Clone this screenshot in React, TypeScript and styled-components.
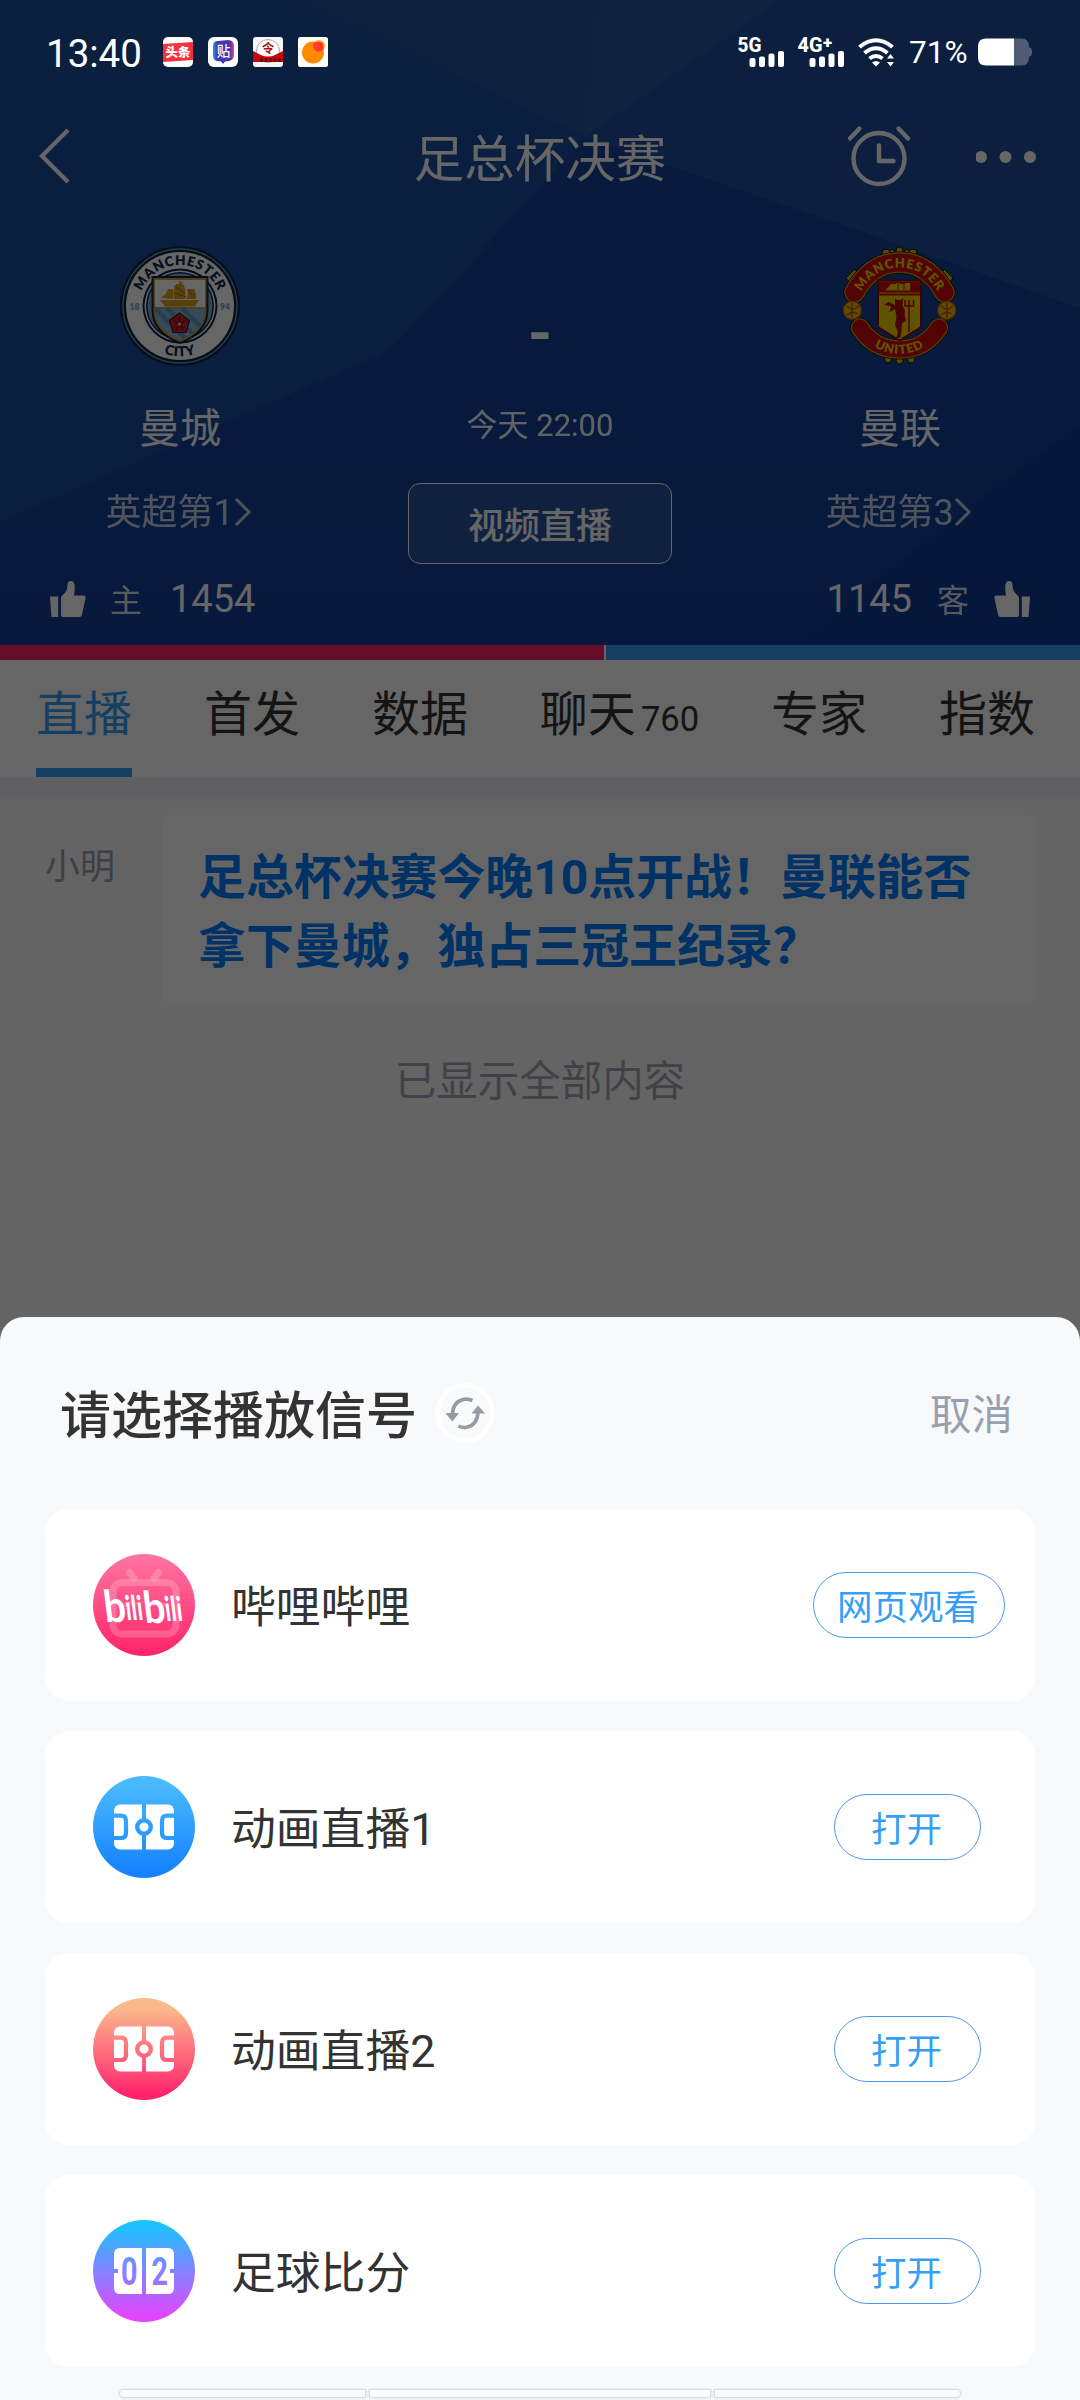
import React, { useState } from 'react';
import styled, { createGlobalStyle } from 'styled-components';

type Tab = { name: string; count?: number };

type Signal = {
  name: string;
  action: string;
  icon: React.ReactNode;
  wide?: boolean;
};

const GlobalStyle = createGlobalStyle`
  * {
    box-sizing: border-box;
  }
  body {
    margin: 0;
    font-family: Roboto, "Noto Sans CJK SC", sans-serif;
  }
`;

const Screen = styled.div`
  position: relative;
  width: 1080px;
  height: 2400px;
  overflow: hidden;
  background: #f8faf8;
`;

/* ---------- status bar ---------- */

const StatusBar = styled.div`
  position: absolute;
  top: 0;
  left: 0;
  z-index: 3;
  display: flex;
  align-items: center;
  width: 100%;
  height: 104px;
  padding: 0 48px 0 46px;
  color: #fff;
`;

const Clock = styled.span`
  width: 117px;
  font-size: 38.5px;
  line-height: 44px;
  padding-top: 3px;
`;

const AppIcons = styled.div`
  display: flex;
  gap: 15px;
  flex: 1;
`;

const Indicators = styled.div`
  display: flex;
  align-items: center;
  gap: 13px;
`;

const Percent = styled.span`
  width: 59px;
  margin: 0 -3px 0 2px;
  padding-top: 1px;
  font-size: 31.5px;
  line-height: 36px;
  white-space: nowrap;
`;

/* ---------- match header ---------- */

const Header = styled.header`
  position: relative;
  height: 645px;
  padding-top: 102px;
  background: #194aa6;
  color: #fff;
`;

const Backdrop = styled.svg`
  position: absolute;
  top: 0;
  left: 0;
`;

const NavBar = styled.div`
  position: relative;
  display: grid;
  grid-template-columns: 1fr auto 1fr;
  align-items: center;
  height: 108px;
  padding: 0 42px 0 37px;
`;

const NavTitle = styled.h1`
  margin: 0;
  padding: 8px 0 0 5px;
  font-size: 50.5px;
  line-height: 60px;
  font-weight: 400;
`;

const NavActions = styled.div`
  display: flex;
  justify-content: flex-end;
  align-items: center;
  gap: 64px;
`;

const Match = styled.div`
  position: relative;
  display: grid;
  grid-template-columns: 360px 360px 360px;
  height: 328px;
`;

const Team = styled.div`
  display: flex;
  flex-direction: column;
  align-items: center;
  padding-top: 36px;
`;

const TeamName = styled.div`
  margin-top: 33px;
  font-size: 41px;
  line-height: 60px;
`;

const Rank = styled.div`
  display: flex;
  align-items: center;
  margin-top: 29px;
  margin-right: 3px;
  font-size: 36px;
  line-height: 50px;
  opacity: 0.75;
`;

const Kickoff = styled.div`
  display: flex;
  flex-direction: column;
  align-items: center;
`;

const Score = styled.div`
  margin-top: 93px;
  font-size: 62px;
  line-height: 60px;
  font-weight: 700;
`;

const Time = styled.div`
  margin-top: 43px;
  font-size: 31px;
  line-height: 40px;
  opacity: 0.95;
`;

const WatchButton = styled.button`
  width: 264px;
  height: 81px;
  margin-top: 37px;
  padding: 0 0 2px;
  border: 1px solid #fff;
  border-radius: 12px;
  background: rgba(255, 255, 255, 0.1);
  color: #fff;
  font-family: inherit;
  font-size: 36px;
  font-weight: 500;
`;

const Votes = styled.div`
  position: relative;
  display: flex;
  justify-content: space-between;
  height: 90px;
  margin-top: 16px;
  padding: 0 50px;
`;

const Vote = styled.div<{ $away?: boolean }>`
  display: flex;
  flex-direction: ${({ $away }) => ($away ? 'row-reverse' : 'row')};
  align-items: center;
  font-size: 38px;
`;

const VoteSide = styled.span<{ $away?: boolean }>`
  margin: ${({ $away }) => ($away ? '0 25px 2px 25px' : '0 28px 2px 24px')};
  font-size: 32px;
  opacity: 0.85;
`;

const VoteBar = styled.div`
  display: flex;
  gap: 2px;
  height: 15px;
  background: #fff;
`;

const VoteShare = styled.div<{ $color: string }>`
  background: ${({ $color }) => $color};
`;

/* ---------- tabs and feed ---------- */

const Tabs = styled.nav`
  display: flex;
  justify-content: space-between;
  height: 117px;
  padding: 0 45px 0 36px;
  background: #fff;
`;

const TabItem = styled.button<{ $active: boolean }>`
  display: flex;
  align-items: baseline;
  height: 117px;
  padding: 20px 0 0;
  border: 0;
  border-bottom: 9px solid ${({ $active }) => ($active ? '#369ff5' : 'transparent')};
  background: none;
  color: ${({ $active }) => ($active ? '#369ff5' : '#333')};
  font-family: inherit;
  font-size: 48px;
  line-height: 70px;
`;

const TabCount = styled.span`
  margin-left: 5px;
  font-size: 34.5px;
`;

const Gap = styled.div`
  height: 26px;
  background: linear-gradient(#eef1f4, #f0f1f6 70%, #f8faf8);
`;

const FeedRow = styled.div`
  display: grid;
  grid-template-columns: 117px 873px;
  padding: 12px 45px 0;
`;

const Author = styled.div`
  padding-top: 28px;
  font-size: 35px;
  line-height: 50px;
  color: #989fad;
`;

const Message = styled.div`
  height: 189px;
  padding: 29px 36px 0;
  border-radius: 6px;
  background: #fff;
  color: #007dff;
  font-size: 47.9px;
  line-height: 69px;
  font-weight: 700;
`;

const FeedEnd = styled.div`
  margin-top: 48px;
  font-size: 41.5px;
  line-height: 60px;
  text-align: center;
  color: #a2a6b2;
`;

/* ---------- bottom sheet ---------- */

const Mask = styled.div`
  position: absolute;
  inset: 0;
  z-index: 1;
  background: rgba(0, 0, 0, 0.6);
`;

const Sheet = styled.section`
  position: absolute;
  left: 0;
  bottom: 0;
  z-index: 2;
  width: 100%;
  height: 1083px;
  border-radius: 24px 24px 0 0;
  background: #f7f9fb;
`;

const SheetHead = styled.div`
  display: flex;
  align-items: center;
  height: 192px;
  padding: 0 67px 0 60px;
`;

const SheetTitle = styled.h2`
  margin: 7px 18px 0 0;
  font-size: 51px;
  line-height: 60px;
  font-weight: 500;
  color: #333;
`;

const Cancel = styled.button`
  margin: 5px 0 0 auto;
  padding: 0;
  border: 0;
  background: none;
  color: #999fae;
  font-family: inherit;
  font-size: 41.5px;
  line-height: 60px;
`;

const SignalList = styled.div`
  display: flex;
  flex-direction: column;
  gap: 30px;
  padding: 0 45px;
`;

const SignalCard = styled.div<{ $wide?: boolean }>`
  display: flex;
  align-items: center;
  height: 192px;
  padding: 0 ${({ $wide }) => ($wide ? 30 : 54)}px 0 48px;
  border-radius: 24px;
  background: #fff;
`;

const SignalName = styled.span`
  flex: 1;
  padding-top: 6px;
  margin-left: 36px;
  font-size: 44.8px;
  line-height: 60px;
  color: #333;
`;

const OpenButton = styled.button<{ $wide?: boolean }>`
  width: ${({ $wide }) => ($wide ? 192 : 147)}px;
  height: 66px;
  padding: 0 2px 2px 0;
  border: 1px solid #4c9be6;
  border-radius: 33px;
  background: #fff;
  color: #369ff5;
  font-family: inherit;
  font-size: 35.5px;
`;

const NavHint = styled.div`
  display: flex;
  gap: 5px;
  padding: 23px 120px 0;
`;

const NavHintPart = styled.i<{ $grow: number; $radius: string }>`
  flex: ${({ $grow }) => $grow} 0 0;
  height: 7px;
  border-radius: ${({ $radius }) => $radius};
  background: #fbfcfe;
  box-shadow: 0 0 2px 1px rgba(0, 0, 0, 0.16);
`;

/* ---------- drawings ---------- */

const HeaderBackdrop = () => (
  <Backdrop width="1080" height="645" viewBox="0 0 1080 645">
    <defs>
      <linearGradient id="deep" x1="0" y1="0" x2="0" y2="1">
        <stop offset="0" stopColor="#1d5099" />
        <stop offset=".5" stopColor="#174a9c" />
        <stop offset="1" stopColor="#134296" />
      </linearGradient>
    </defs>
    <rect width="1080" height="645" fill="url(#deep)" />
    <path d="M0 0H303L585 137L400 350L0 522Z" fill="#1c4f9f" opacity=".5" />
    <path d="M0 140L230 275L0 380Z" fill="#184898" opacity=".6" />
    <path d="M0 522L390 350L585 137L830 220L1080 308V645H0Z" fill="#113f96" opacity=".65" />
    <path d="M303 0H780L585 137Z" fill="#25529a" />
    <path d="M505 0H600L585 137L457 75Z" fill="#29569f" opacity=".5" />
    <path d="M600 0H780L585 137Z" fill="#2d5aa3" opacity=".6" />
    <path d="M780 0H1080V308L830 220L585 137Z" fill="#1f4f9e" />
    <path d="M1080 425L965 510L795 645H1080Z" fill="#0f3a97" />
  </Backdrop>
);

const Chevron = () => (
  <svg width="36" height="58" viewBox="0 0 36 58" fill="none">
    <path d="M31 3L5 29L31 55" stroke="#fff" strokeWidth="4.2" />
  </svg>
);

const Alarm = () => (
  <svg width="66" height="66" viewBox="0 0 66 66" fill="none" stroke="#fff" strokeWidth="4.4" strokeLinecap="round">
    <circle cx="33" cy="35.500" r="25.5" />
    <path d="M33 22.500V38H47.500" strokeLinejoin="round" />
    <path d="M4 15.500L13.500 5.500M62 15.500L52.500 5.500" />
  </svg>
);

const Dots = () => (
  <svg width="62" height="14" viewBox="0 0 62 14" fill="#fff">
    <circle cx="5" cy="8" r="6" />
    <circle cx="29.500" cy="8" r="6" />
    <circle cx="54" cy="8" r="6" />
  </svg>
);

const RankArrow = () => (
  <svg width="18" height="30" viewBox="0 0 18 30" fill="none">
    <path d="M2 1L15 14L2 27" stroke="#fff" strokeWidth="3" />
  </svg>
);

const Thumb = ({ flip }: { flip?: boolean }) => (
  <svg width="36" height="36" viewBox="0 0 36 36" fill="#fff">
    <g transform={flip ? 'translate(36 0) scale(-1 1)' : undefined}>
      <path d="M0 15.500H8.200V36H1.500Z" />
      <path d="M11 34V17Q11 15.500 12.200 14.500Q17.500 10.500 17.500 4Q17.500 0 21 0Q24.800 0.500 24.800 5.500Q24.800 10 24 14.500H34Q36 14.700 35.600 17L32 33.500Q31.500 36 29.500 36H13Q11 36 11 34Z" />
    </g>
  </svg>
);

const CityCrest = () => (
  <svg width="120" height="120" viewBox="0 0 120 120" fontFamily="Lato, sans-serif" fontWeight="800">
    <defs>
      <path id="cityTop" d="M19 60A41 41 0 0 1 101 60" />
      <path id="cityBottom" d="M9.500 60A50.500 50.500 0 0 0 110.500 60" />
      <clipPath id="cityShield">
        <path d="M35 33H85V64Q85 84 60 94Q35 84 35 64Z" />
      </clipPath>
    </defs>
    <circle cx="60" cy="60" r="60" fill="#0b2342" />
    <circle cx="60" cy="60" r="57" fill="none" stroke="#5d9cc4" strokeWidth="1.400" />
    <circle cx="60" cy="60" r="54" fill="#fff" />
    <circle cx="60" cy="60" r="37.500" fill="#0f2548" />
    <circle cx="60" cy="60" r="35.500" fill="#fff" />
    <circle cx="60" cy="60" r="34" fill="#0f2548" />
    <circle cx="60" cy="60" r="32.500" fill="#7ab2d8" />
    <path d="M31.500 30H88.500V64Q88.500 87 60 98Q31.500 87 31.500 64Z" fill="#0f2548" />
    <path d="M33.500 32H86.500V64Q86.500 85.500 60 96Q33.500 85.500 33.500 64Z" fill="#d0a02c" />
    <g clipPath="url(#cityShield)">
      <rect x="35" y="34" width="50" height="27" fill="#fff" />
      <rect x="35" y="62.500" width="50" height="34" fill="#86b8d8" />
      <path d="M35 62L72 99M47 62L84 99M62 62L99 99" stroke="#5f9cc6" strokeWidth="4.500" />
      <path d="M40 54H79L75 60.500H45Z M41 52Q47 48 48 43L53 43V53Z M54 53Q52 46 56 38L63 38Q67 45 65 53Z M66 53Q69 47 67 43L74 43Q77 48 76 53Z M59 35L64 37L59 38Z" fill="#d8a220" />
      <path d="M54 40L64 47M55 47L66 51M68 45L74 50" stroke="#9a6b12" strokeWidth="1" />
    </g>
    <path d="M59.500 67L69.500 74.500L66 86.500H53L49.500 74.500Z" fill="#c8202c" stroke="#5a0d1c" strokeWidth="1.200" />
    <path d="M59.500 70V78L65 75M59.500 78L63 84M59.500 78L56 84M59.500 78L54 75" stroke="#5a0d1c" strokeWidth="1" fill="none" />
    <circle cx="59.500" cy="78" r="1.600" fill="#f0d0b0" />
    <text fontSize="13.500" fill="#13294b" textAnchor="middle" letterSpacing=".6">
      <textPath href="#cityTop" startOffset="50%">MANCHESTER</textPath>
    </text>
    <text fontSize="14" fill="#13294b" textAnchor="middle" letterSpacing=".3">
      <textPath href="#cityBottom" startOffset="50%">CITY</textPath>
    </text>
    <text x="14.500" y="63.500" fontSize="8.500" fill="#6fa8cc" textAnchor="middle">18</text>
    <text x="105" y="63.500" fontSize="8.500" fill="#6fa8cc" textAnchor="middle">94</text>
  </svg>
);

const UnitedCrest = () => (
  <svg width="120" height="120" viewBox="0 0 120 120" fontFamily="Lato, sans-serif" fontWeight="800">
    <defs>
      <path id="unitedTopBand" d="M14.500 46.500Q31 16.500 59.500 16.500Q88 16.500 104.500 46.500" />
      <path id="unitedTop" d="M17.500 53Q32 21.500 59.500 21.500Q87 21.500 101.500 53" />
      <path id="unitedBottomBand" d="M20 81.500Q34 103.500 59.500 103.500Q85 103.500 99 81.500" />
      <path id="unitedBottom" d="M16 84Q34 107.800 59.500 107.800Q85 107.800 103 84" />
    </defs>
    <g fill="#d8b400" stroke="#1a1200" strokeWidth="1">
      <circle cx="46" cy="7" r="4" />
      <circle cx="52" cy="6" r="2.500" />
      <circle cx="59.500" cy="4.500" r="3.500" />
      <circle cx="67" cy="6" r="2.500" />
      <circle cx="73" cy="7" r="4" />
      <path d="M6 32L15 23L17 27L9 36Z M113 32L104 23L102 27L110 36Z" />
      <circle cx="48" cy="113.500" r="3.500" />
      <circle cx="59.500" cy="114.500" r="3.500" />
      <circle cx="71" cy="113.500" r="3.500" />
    </g>
    <g fill="none" strokeLinecap="round">
      <use href="#unitedTopBand" stroke="#140b00" strokeWidth="22" />
      <use href="#unitedTopBand" stroke="#d0a400" strokeWidth="20.500" />
      <use href="#unitedTopBand" stroke="#cc0808" strokeWidth="18" />
      <use href="#unitedBottomBand" stroke="#140b00" strokeWidth="20" />
      <use href="#unitedBottomBand" stroke="#d0a400" strokeWidth="18.500" />
      <use href="#unitedBottomBand" stroke="#cc0808" strokeWidth="16" />
    </g>
    <g stroke="#c0480a" strokeWidth="1.300">
      <circle cx="12.300" cy="64.300" r="9.200" fill="#e6bc00" />
      <path d="M7 60Q12 66 19 60M12 57V72M7 69Q12 64 18 68" fill="none" />
      <circle cx="106.700" cy="64.300" r="9.200" fill="#e6bc00" />
      <path d="M101 60Q107 66 113 60M107 57V72M101 69Q107 64 112 68" fill="none" />
    </g>
    <path d="M38 34.500H81V81L59.500 94.500L38 81Z" fill="#f0d000" stroke="#8a0a06" strokeWidth="2" />
    <path d="M39 35.500H80V49.500H39Z" fill="#cc0808" />
    <path d="M39 47H80" stroke="#f0d000" strokeWidth="1" />
    <path d="M45 44.500L51 38H56V37H60V38H65V37H70V44.500Z" fill="#f0d000" />
    <path d="M58 37V44M64 37V44" stroke="#cc0808" strokeWidth="1" />
    <path d="M55 52L57 54H61L63 52L62.500 60Q66 63 64.500 68L66 75L62 77L61.500 84L60.500 92L56 92L58 86L55 79L56.500 71L55 63L49.500 66L51 60L44 59L48 56L55 59Z" fill="#b80808" />
    <path d="M69 86V54M65 54V60H73.500V54" stroke="#b80808" strokeWidth="1.500" fill="none" />
    <text fontSize="13" fill="#f0cc00" textAnchor="middle" letterSpacing=".6">
      <textPath href="#unitedTop" startOffset="50%">MANCHESTER</textPath>
    </text>
    <text fontSize="12.500" fill="#f0cc00" textAnchor="middle" letterSpacing=".9">
      <textPath href="#unitedBottom" startOffset="50%">UNITED</textPath>
    </text>
  </svg>
);

const StatusApps = () => (
  <AppIcons>
    <svg width="30" height="30" viewBox="0 0 30 30">
      <rect width="30" height="30" rx="5" fill="#fff" />
      <path d="M0 7L30 5V23L0 25Z" fill="#f5323c" />
      <text x="15" y="20" fontSize="12.500" fontWeight="900" fill="#fff" textAnchor="middle">头条</text>
    </svg>
    <svg width="30" height="30" viewBox="0 0 30 30">
      <defs>
        <linearGradient id="bubble" x1="0" y1="0" x2="1" y2="0">
          <stop offset="0" stopColor="#18a0f0" />
          <stop offset=".2" stopColor="#3a3aa8" />
          <stop offset=".8" stopColor="#4a34b0" />
          <stop offset="1" stopColor="#e83c8c" />
        </linearGradient>
      </defs>
      <rect width="30" height="30" rx="6" fill="#fff" />
      <path d="M5 9Q5 4 10 4L20 3Q26 3 26 9V18Q26 23 21 24L17 24.500L15 27L13 24.500L10 24Q5 24 5 18Z" fill="url(#bubble)" />
      <text x="15.500" y="19" fontSize="13.500" fontWeight="500" fill="#fff" textAnchor="middle">贴</text>
    </svg>
    <svg width="30" height="30" viewBox="0 0 30 30">
      <rect width="30" height="30" rx="3" fill="#f7f7f7" />
      <circle cx="15" cy="14" r="11.500" fill="#fff" stroke="#aaa" />
      <path d="M0 14L8 18Q15 21 22 18L30 14V25H0Z" fill="#c4070d" />
      <path d="M7 23H28" stroke="#7d0508" strokeWidth="4" strokeDasharray="3 1.500" />
      <text x="15" y="16" fontSize="12.500" fontWeight="700" fill="#a3141a" textAnchor="middle">令</text>
    </svg>
    <svg width="30" height="30" viewBox="0 0 30 30">
      <rect width="30" height="30" rx="2.500" fill="#fff" />
      <circle cx="21" cy="9" r="6" fill="#ffb400" />
      <circle cx="15" cy="15.500" r="11" fill="#ff8a00" />
      <path d="M15 7Q19 3 25 6Q27 13 22 15Q15 15 15 7Z" fill="#ff3d2e" />
    </svg>
  </AppIcons>
);

const Cellular = ({ label, width, plus }: { label: string; width: number; plus?: boolean }) => (
  <svg width="47" height="42" viewBox="0 -6 47 42" fill="#fff">
    <text x="-0.500" y="15" fontSize="20" fontWeight="800" textLength={width} lengthAdjust="spacingAndGlyphs">{label}</text>
    {plus && <text x="25" y="10.500" fontSize="17" fontWeight="900">+</text>}
    <rect x="11.500" y="21" width="6" height="9" rx="2" />
    <rect x="21" y="19.500" width="6" height="10.500" rx="2" />
    <rect x="30.500" y="16.500" width="6" height="13.500" rx="2" />
    <rect x="40" y="14" width="6" height="16" rx="2" />
  </svg>
);

const Wifi = () => (
  <svg width="36" height="30" viewBox="0 0 36 30" fill="none" stroke="#fff" strokeWidth="4">
    <path d="M1.500 10Q18 -3.500 34.500 10" />
    <path d="M6.500 16Q18 6.500 29.500 16" />
    <path d="M11.500 21.500Q18 16.500 24.500 21.500" />
    <path d="M14 25.500Q18 22.500 22 25.500L18 29.500Z" fill="#fff" stroke="none" />
    <path d="M32.500 17L36 21.500H29Z M32.500 29.500L36 25H29Z" fill="#fff" stroke="none" />
  </svg>
);

const Battery = () => (
  <svg width="54" height="28" viewBox="0 0 54 28">
    <path d="M36 0.500H43Q51 0.500 51 8.500V9.500H52Q54 10 54 14Q54 18 52 18.500H51V19.500Q51 27.500 43 27.500H36Z" fill="#fff" opacity=".28" />
    <path d="M8 0.500H36V27.500H8Q0 27.500 0 19.500V8.500Q0 0.500 8 0.500Z" fill="#fff" />
  </svg>
);

const Refresh = () => (
  <svg width="60" height="60" viewBox="0 0 60 60">
    <circle cx="30" cy="30" r="27.500" fill="#f9fafc" stroke="#fff" strokeWidth="5" />
    <g fill="none" stroke="#9899a3" strokeWidth="3.600">
      <path d="M37.500 17.500Q33.500 15.800 29.500 16.200Q18 18 17.500 31" />
      <path d="M23.500 43Q27.500 45 31.500 44.300Q42.500 42 43 29" />
    </g>
    <path d="M10.500 30H24L17.300 38.500Z M36.500 30.500H50L43 22.500Z" fill="#9899a3" />
  </svg>
);

const BiliIcon = () => (
  <svg width="102" height="102" viewBox="0 0 102 102">
    <defs>
      <linearGradient id="bili" x1="0" y1="0" x2="0" y2="1">
        <stop offset="0" stopColor="#ff75a3" />
        <stop offset="1" stopColor="#ff2468" />
      </linearGradient>
    </defs>
    <circle cx="51" cy="51" r="51" fill="url(#bili)" />
    <g fill="none" stroke="#fff" strokeOpacity=".2" strokeWidth="7" strokeLinecap="round">
      <rect x="20" y="28.500" width="63" height="51.500" rx="9" />
      <path d="M36.500 18.500L41 24M65.500 18.500L61 24" />
      <path d="M32 51Q37 48 42 50M61 50Q66 48 71 51" strokeWidth="4" />
    </g>
    <g fill="#fff" fontFamily="Lato, sans-serif" fontWeight="700" transform="translate(-6 0) skewX(7)">
      <text x="10" y="68.500" fontSize="44" textLength="22" lengthAdjust="spacingAndGlyphs">b</text>
      <text x="31.500" y="66.500" fontSize="34" textLength="17.500" lengthAdjust="spacingAndGlyphs">ili</text>
      <text x="49.500" y="69" fontSize="44" textLength="22" lengthAdjust="spacingAndGlyphs">b</text>
      <text x="71" y="67" fontSize="34" textLength="17.500" lengthAdjust="spacingAndGlyphs">ili</text>
    </g>
  </svg>
);

const PitchIcon = ({ id, from, to }: { id: string; from: string; to: string }) => (
  <svg width="102" height="102" viewBox="0 0 102 102">
    <defs>
      <linearGradient id={id} x1="0" y1="0" x2="0" y2="1">
        <stop offset=".1" stopColor={from} />
        <stop offset=".95" stopColor={to} />
      </linearGradient>
      <mask id={`${id}Lines`}>
        <rect x="21" y="28.500" width="60" height="45" rx="6" fill="#fff" />
        <path d="M51 26V76" stroke="#000" strokeWidth="4" />
        <circle cx="51" cy="51" r="6.800" fill="#fff" stroke="#000" strokeWidth="4.400" />
        <path d="M20 39.700H28Q33 39.700 33 44.700V57Q33 62 28 62H20M82 39.700H74Q69 39.700 69 44.700V57Q69 62 74 62H82" fill="none" stroke="#000" strokeWidth="4.200" />
      </mask>
    </defs>
    <circle cx="51" cy="51" r="51" fill={`url(#${id})`} />
    <rect x="20" y="27" width="62" height="48" fill="#fff" mask={`url(#${id}Lines)`} />
  </svg>
);

const ScoreIcon = () => (
  <svg width="102" height="102" viewBox="0 0 102 102">
    <defs>
      <linearGradient id="board" gradientUnits="userSpaceOnUse" x1="0" y1="0" x2="0" y2="102">
        <stop offset=".05" stopColor="#19c3ff" />
        <stop offset=".5" stopColor="#8482ff" />
        <stop offset=".95" stopColor="#e345ff" />
      </linearGradient>
    </defs>
    <circle cx="51" cy="51" r="51" fill="url(#board)" />
    <path d="M27 28H49V74H27Q21 74 21 68V53H25V49H21V34Q21 28 27 28Z" fill="#fff" />
    <path d="M75 28H53V74H75Q81 74 81 68V53H77V49H81V34Q81 28 75 28Z" fill="#fff" />
    <g fill="url(#board)" fontSize="38" fontWeight="700">
      <text x="28" y="64.500" textLength="16.500" lengthAdjust="spacingAndGlyphs">0</text>
      <text x="58.500" y="64.500" textLength="16.500" lengthAdjust="spacingAndGlyphs">2</text>
    </g>
  </svg>
);

/* ---------- data ---------- */

const tabs: Tab[] = [
  { name: '直播' },
  { name: '首发' },
  { name: '数据' },
  { name: '聊天', count: 760 },
  { name: '专家' },
  { name: '指数' },
];

const signals: Signal[] = [
  { name: '哔哩哔哩', action: '网页观看', icon: <BiliIcon />, wide: true },
  { name: '动画直播1', action: '打开', icon: <PitchIcon id="blue" from="#48b8ff" to="#1482ff" /> },
  { name: '动画直播2', action: '打开', icon: <PitchIcon id="pink" from="#fbb98c" to="#ff236b" /> },
  { name: '足球比分', action: '打开', icon: <ScoreIcon /> },
];

const App = () => {
  const [activeTab, setActiveTab] = useState<string>('直播');
  const [sheetOpen, setSheetOpen] = useState<boolean>(true);

  const homeVotes = 1454;
  const awayVotes = 1145;
  const homeShare = (homeVotes / (homeVotes + awayVotes)) * 100;

  return (
    <Screen>
      <GlobalStyle />
      <StatusBar>
        <Clock>13:40</Clock>
        <StatusApps />
        <Indicators>
          <Cellular label="5G" width={24} />
          <Cellular label="4G" width={25} plus />
          <Wifi />
          <Percent>71%</Percent>
          <Battery />
        </Indicators>
      </StatusBar>

      <Header>
        <HeaderBackdrop />
        <NavBar>
          <Chevron />
          <NavTitle>足总杯决赛</NavTitle>
          <NavActions>
            <Alarm />
            <Dots />
          </NavActions>
        </NavBar>
        <Match>
          <Team>
            <CityCrest />
            <TeamName>曼城</TeamName>
            <Rank>英超第1<RankArrow /></Rank>
          </Team>
          <Kickoff>
            <Score>-</Score>
            <Time>今天 22:00</Time>
            <WatchButton onClick={() => setSheetOpen(true)}>视频直播</WatchButton>
          </Kickoff>
          <Team>
            <UnitedCrest />
            <TeamName>曼联</TeamName>
            <Rank>英超第3<RankArrow /></Rank>
          </Team>
        </Match>
        <Votes>
          <Vote>
            <Thumb />
            <VoteSide>主</VoteSide>
            {homeVotes}
          </Vote>
          <Vote $away>
            <Thumb flip />
            <VoteSide $away>客</VoteSide>
            {awayVotes}
          </Vote>
        </Votes>
      </Header>
      <VoteBar>
        <VoteShare $color="#ff2468" style={{ width: `${homeShare}%` }} />
        <VoteShare $color="#369ff5" style={{ flex: 1 }} />
      </VoteBar>

      <Tabs>
        {tabs.map((tab: Tab) => (
          <TabItem key={tab.name} $active={tab.name === activeTab} onClick={() => setActiveTab(tab.name)}>
            {tab.name}
            {tab.count && <TabCount>{tab.count}</TabCount>}
          </TabItem>
        ))}
      </Tabs>
      <Gap />
      <FeedRow>
        <Author>小明</Author>
        <Message>足总杯决赛今晚10点开战！曼联能否拿下曼城，独占三冠王纪录？</Message>
      </FeedRow>
      <FeedEnd>已显示全部内容</FeedEnd>

      {sheetOpen && (
        <>
          <Mask onClick={() => setSheetOpen(false)} />
          <Sheet>
            <SheetHead>
              <SheetTitle>请选择播放信号</SheetTitle>
              <Refresh />
              <Cancel onClick={() => setSheetOpen(false)}>取消</Cancel>
            </SheetHead>
            <SignalList>
              {signals.map((signal: Signal) => (
                <SignalCard key={signal.name} $wide={signal.wide}>
                  {signal.icon}
                  <SignalName>{signal.name}</SignalName>
                  <OpenButton $wide={signal.wide}>{signal.action}</OpenButton>
                </SignalCard>
              ))}
            </SignalList>
            <NavHint>
              <NavHintPart $grow={245} $radius="4px 0 0 4px" />
              <NavHintPart $grow={340} $radius="0" />
              <NavHintPart $grow={245} $radius="0 4px 4px 0" />
            </NavHint>
          </Sheet>
        </>
      )}
    </Screen>
  );
};

export default App;
